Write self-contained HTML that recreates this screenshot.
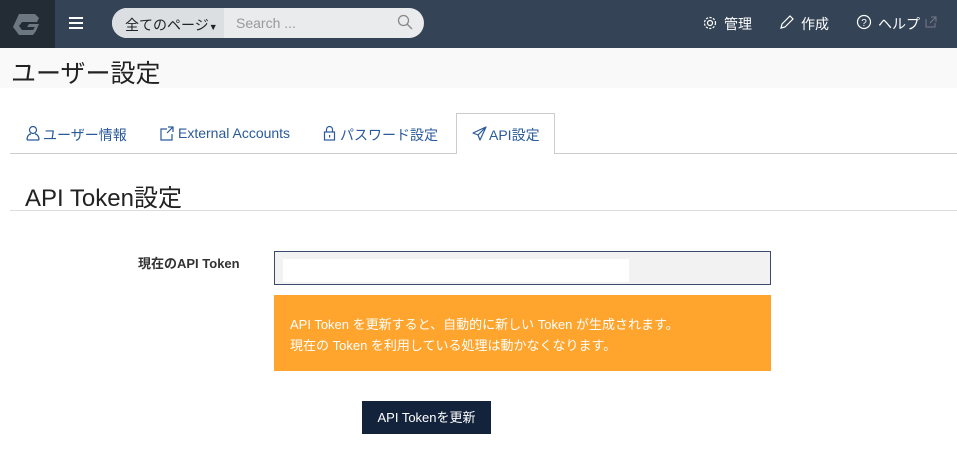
<!DOCTYPE html>
<html><head><meta charset="utf-8"><style>
*{margin:0;padding:0;box-sizing:border-box}
body{width:957px;height:450px;overflow:hidden;background:#fff;font-family:"Liberation Sans","Noto Sans CJK JP",sans-serif;position:relative}
.a{position:absolute}
.hdr{left:0;top:0;width:957px;height:48px;background:#344456}
.logo{left:0;top:0;width:55px;height:48px;background:#232b35}
.nav{color:#fff;font-size:14px;top:14px}
.band{left:0;top:48px;width:957px;height:40px;background:#f9f9f9}
.tab{top:125px;font-size:14px;color:#2a5a9a}
.ti{position:absolute;top:125px}
</style></head><body>
<div class="a hdr"></div>
<div class="a logo"><svg width="55" height="48"><path d="M19 14h16l4 4-2 4H22l-3 4 3 4h11l2-3h-8l2-3h10l-3 7-3 4H19l-6-8z" fill="#6d7781"/></svg></div>
<div class="a" style="left:69px;top:17px;width:14px"><div style="height:2px;background:#fff;margin-bottom:3px"></div><div style="height:2px;background:#fff;margin-bottom:3px"></div><div style="height:2px;background:#fff"></div></div>
<div class="a" style="left:112px;top:8px;width:312px;height:30px;border-radius:15px;background:#e9ebed;overflow:hidden">
<div class="a" style="left:0;top:0;width:112px;height:30px;background:#dcdfe2;font-size:14px;color:#222;padding:7px 0 0 13px">全てのページ<span style="font-size:9px">▼</span></div>
<div class="a" style="left:124px;top:7px;font-size:14px;color:#999">Search ...</div>
<svg class="a" style="left:285px;top:6px" width="16" height="16"><circle cx="6.5" cy="6.5" r="5" fill="none" stroke="#888" stroke-width="1.3"/><path d="M10 10l5 5" stroke="#888" stroke-width="1.3"/></svg>
</div>
<svg class="a" style="left:702px;top:15px" width="16" height="16"><circle cx="8" cy="8" r="2.5" fill="none" stroke="#fff" stroke-width="1.2"/><circle cx="8" cy="8" r="5.5" fill="none" stroke="#fff" stroke-width="1.2" stroke-dasharray="2.2 1.4"/></svg>
<div class="a nav" style="left:724px">管理</div>
<svg class="a" style="left:779px;top:15px" width="15" height="15"><path d="M2 13l1-4 8-8 3 3-8 8z" fill="none" stroke="#fff" stroke-width="1.2"/></svg>
<div class="a nav" style="left:801px">作成</div>
<svg class="a" style="left:856px;top:14px" width="16" height="16"><circle cx="8" cy="8" r="6.5" fill="none" stroke="#fff" stroke-width="1.2"/><text x="8" y="12" font-size="10" fill="#fff" text-anchor="middle" font-family="Liberation Sans">?</text></svg>
<div class="a nav" style="left:878px">ヘルプ</div>
<svg class="a" style="left:925px;top:16px" width="12" height="12"><path d="M1 3v8h9V7M6 1h5v5M11 1L5 7" fill="none" stroke="#778" stroke-width="1"/></svg>
<div class="a band"></div>
<div class="a" style="left:11px;top:54px;font-size:25px;color:#222">ユーザー設定</div>
<div class="a" style="left:10px;top:153px;width:947px;height:1px;background:#ccc"></div>
<div class="a" style="left:456px;top:113px;width:99px;height:41px;border:1px solid #ccc;border-bottom:none;background:#fff"></div>
<svg class="ti" style="left:26px" width="14" height="16"><circle cx="7" cy="5" r="3.5" fill="none" stroke="#2a5a9a" stroke-width="1.2"/><path d="M1 15c0-4 2-6 4-6M13 15c0-4-2-6-4-6M1 15h12" fill="none" stroke="#2a5a9a" stroke-width="1.2"/></svg>
<div class="a tab" style="left:43px">ユーザー情報</div>
<svg class="ti" style="left:160px" width="14" height="16"><path d="M7 4H1v11h11V9M8 2h5v5M13 2L7 8" fill="none" stroke="#2a5a9a" stroke-width="1.2"/></svg>
<div class="a tab" style="left:178px">External Accounts</div>
<svg class="ti" style="left:323px" width="13" height="16"><path d="M3.5 7V4.5a3 3 0 0 1 6 0V7" fill="none" stroke="#2a5a9a" stroke-width="1.2"/><rect x="1.5" y="7" width="10" height="8" fill="none" stroke="#2a5a9a" stroke-width="1.2"/><rect x="6" y="10" width="1.2" height="2.5" fill="#2a5a9a"/></svg>
<div class="a tab" style="left:340px">パスワード設定</div>
<svg class="ti" style="left:472px" width="15" height="16"><path d="M14 2L1 8l5 2 2 5zM6 10l8-8" fill="none" stroke="#2a5a9a" stroke-width="1.2" stroke-linejoin="round"/></svg>
<div class="a tab" style="left:489px">API設定</div>
<div class="a" style="left:25px;top:178px;font-size:24px;color:#222">API Token設定</div>
<div class="a" style="left:10px;top:210px;width:947px;height:1px;background:#ddd"></div>
<div class="a" style="left:138px;top:253px;font-size:13px;font-weight:bold;color:#333">現在のAPI Token</div>
<div class="a" style="left:274px;top:251px;width:497px;height:34px;border:1px solid #3a4a6a;background:#f2f2f2"><div class="a" style="left:8px;top:7px;width:346px;height:23px;background:#fff"></div></div>
<div class="a" style="left:274px;top:295px;width:497px;height:76px;background:#ffa42c;color:#fff;font-size:13px;line-height:21px;padding:19px 0 0 16px">API Token を更新すると、自動的に新しい Token が生成されます。<br>現在の Token を利用している処理は動かなくなります。</div>
<div class="a" style="left:362px;top:401px;width:129px;height:33px;background:#14233c;color:#fff;font-size:13px;text-align:center;line-height:33px">API Tokenを更新</div>
</body></html>
